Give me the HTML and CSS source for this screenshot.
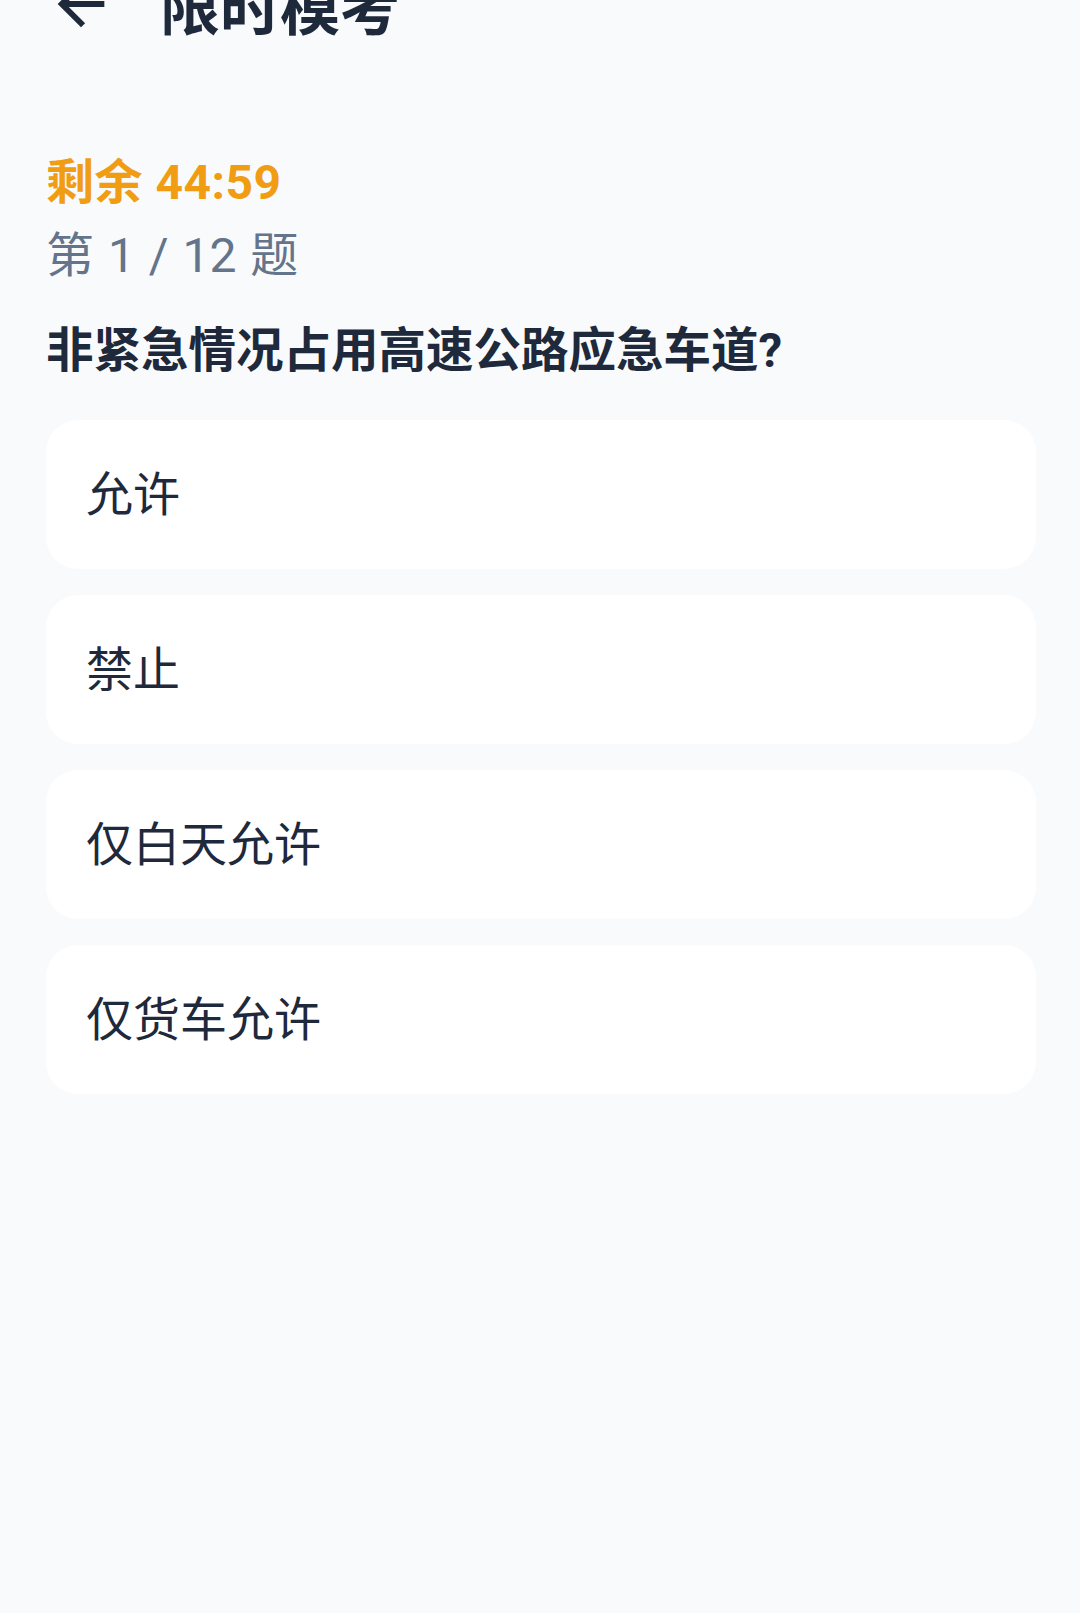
FILE: index.html
```html
<!DOCTYPE html>
<html lang="zh-CN">
<head>
    <meta charset="UTF-8">
    <meta name="viewport" content="width=device-width, initial-scale=1.0">
    <title>限时模考</title>
    <link rel="stylesheet" href="styles.css">
</head>
<body>
    <header class="topo">
        <svg class="voltar" viewBox="0 0 24 24" aria-hidden="true">
            <path d="M20 11H7.83l5.59-5.59L12 4l-8 8 8 8 1.41-1.41L7.83 13H20v-2z"/>
        </svg>
        <h1 class="titulo">限时模考</h1>
    </header>

    <main class="prova">
        <div class="tempo">剩余 44:59</div>
        <div class="contador">第 1 / 12 题</div>
        <h2 class="pergunta">非紧急情况占用高速公路应急车道?</h2>

        <ul class="opcoes">
            <li class="opcao">允许</li>
            <li class="opcao">禁止</li>
            <li class="opcao">仅白天允许</li>
            <li class="opcao">仅货车允许</li>
        </ul>
    </main>
</body>
</html>
```

FILE: styles.css
```css
body {
    margin: 0;
    padding: 0 44px 0 46px;
    min-height: 100vh;
    background-color: #f8fafc;
    font-family: Roboto, "Noto Sans CJK SC", sans-serif;
    color: #1e293b;
    overflow: hidden;
}

.topo {
    display: flex;
    align-items: flex-start;
    margin-top: -31px;
}

.voltar {
    width: 70px;
    height: 70px;
    fill: #1e293b;
    flex-shrink: 0;
}

.titulo {
    margin: 5px 0 0 44px;
    font-size: 60px;
    line-height: 72px;
    font-weight: 700;
}

.tempo {
    margin-top: 105px;
    font-size: 48px;
    line-height: 64px;
    font-weight: 700;
    letter-spacing: 0.5px;
    color: #f09d14;
}

.contador {
    margin-top: 9px;
    font-size: 48px;
    line-height: 64px;
    word-spacing: 2px;
    color: #64748b;
}

.pergunta {
    margin: 31px 0 0;
    font-size: 47.5px;
    line-height: 64px;
    font-weight: 700;
}

.opcoes {
    list-style: none;
    margin: 37px 0 0;
    padding: 0;
    display: flex;
    flex-direction: column;
    gap: 26px;
}

.opcao {
    height: 149px;
    display: flex;
    align-items: center;
    padding: 0 40px;
    background-color: #ffffff;
    border-radius: 32px;
    font-size: 47px;
    line-height: 64px;
}
```
